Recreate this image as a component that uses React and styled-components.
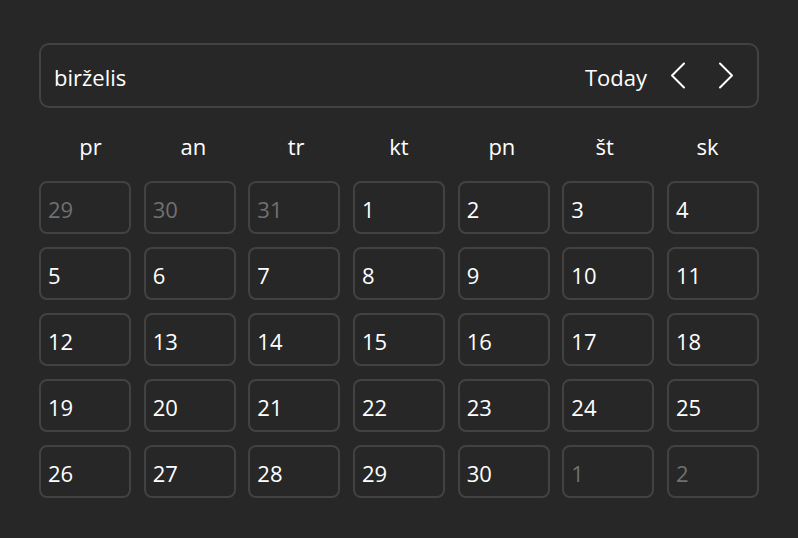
import React from "react";
import styled, { createGlobalStyle } from "styled-components";

const GlobalStyle = createGlobalStyle`
  html, body {
    margin: 0;
    background: #272727;
  }
  body {
    font-family: "Open Sans", "Noto Sans", sans-serif;
    color: #ffffff;
  }
`;

const weekdays = ["pr", "an", "tr", "kt", "pn", "št", "sk"];

function buildDays() {
  const days = [29, 30, 31].map((d) => ({ day: d, muted: true }));
  for (let d = 1; d <= 30; d++) days.push({ day: d, muted: false });
  days.push({ day: 1, muted: true }, { day: 2, muted: true });
  return days;
}

function ChevronLeft() {
  return (
    <svg width="16" height="27" viewBox="0 0 16 27" fill="none">
      <path d="M14 1.5 L2 13.5 L14 25.5" stroke="#fff" strokeWidth="2" strokeLinecap="round" strokeLinejoin="round" />
    </svg>
  );
}

function ChevronRight() {
  return (
    <svg width="16" height="27" viewBox="0 0 16 27" fill="none">
      <path d="M2 1.5 L14 13.5 L2 25.5" stroke="#fff" strokeWidth="2" strokeLinecap="round" strokeLinejoin="round" />
    </svg>
  );
}

export default function App() {
  const days = buildDays();
  return (
    <Page>
      <GlobalStyle />
      <Calendar>
        <Header>
          <Month>birželis</Month>
          <Controls>
            <TodayButton>Today</TodayButton>
            <NavButton aria-label="previous">
              <ChevronLeft />
            </NavButton>
            <NavButton aria-label="next">
              <ChevronRight />
            </NavButton>
          </Controls>
        </Header>
        <Grid $gap={0}>
          {weekdays.map((w) => (
            <Weekday key={w}>{w}</Weekday>
          ))}
        </Grid>
        <Grid $gap={12.7}>
          {days.map((d, i) => (
            <Day key={i} $muted={d.muted}>
              {d.day}
            </Day>
          ))}
        </Grid>
      </Calendar>
    </Page>
  );
}

const Page = styled.div`
  padding: 43px 40px 0 39px;
  box-sizing: border-box;
  width: 798px;
  height: 538px;
`;

const Calendar = styled.div`
  width: 720px;
  display: flex;
  flex-direction: column;
`;

const Header = styled.div`
  box-sizing: border-box;
  height: 65px;
  border: 2px solid #424242;
  border-radius: 10px;
  display: flex;
  align-items: center;
  justify-content: space-between;
  padding: 3px 23px 0 13px;
`;

const Month = styled.div`
  font-size: 22px;
`;

const Controls = styled.div`
  display: flex;
  align-items: center;
`;

const TodayButton = styled.button`
  background: none;
  border: none;
  color: #fff;
  font-family: inherit;
  font-size: 22px;
  padding: 0;
  margin-right: 23px;
`;

const NavButton = styled.button`
  background: none;
  border: none;
  padding: 0;
  margin: -3px 0 0 0;
  display: flex;
  & + & {
    margin-left: 32px;
  }
`;

const Grid = styled.div`
  display: grid;
  grid-template-columns: repeat(7, 1fr);
  column-gap: ${(p) => p.$gap}px;
  row-gap: 13px;
`;

const Weekday = styled.div`
  height: 73px;
  display: flex;
  align-items: center;
  justify-content: center;
  font-size: 22px;
  padding-top: 2px;
  box-sizing: border-box;
`;

const Day = styled.div`
  box-sizing: border-box;
  height: 53px;
  border: 2px solid #424242;
  border-radius: 8px;
  display: flex;
  align-items: center;
  padding: 2px 0 0 7px;
  font-size: 22px;
  color: ${(p) => (p.$muted ? "#707070" : "#ffffff")};
`;
